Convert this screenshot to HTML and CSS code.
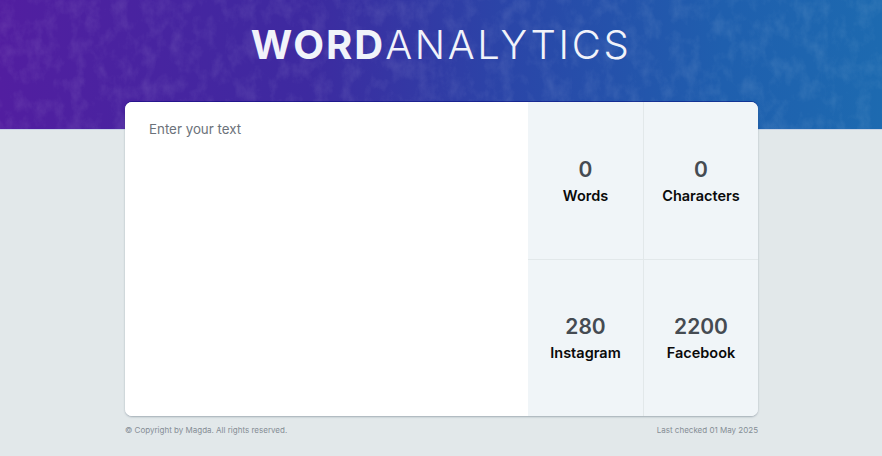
FILE: index.html
```html
<!DOCTYPE html>
<html lang="en">
<head>
    <meta charset="UTF-8">
    <meta name="viewport" content="width=device-width, initial-scale=1.0">
    <title>Word Analytics</title>
    <link rel="stylesheet" href="styles.css">
</head>
<body>
    <header class="banner">
        <svg class="banner-texture" aria-hidden="true">
            <filter id="grain">
                <feTurbulence type="fractalNoise" baseFrequency="0.07 0.05" numOctaves="5" seed="23"/>
                <feColorMatrix values="0 0 0 0 1  0 0 0 0 1  0 0 0 0 1  2 0 0 0 -0.85"/>
            </filter>
            <rect width="100%" height="100%" filter="url(#grain)"/>
        </svg>
        <h1 class="logo"><b>WORD</b>ANALYTICS</h1>
    </header>

    <main class="container">
        <section class="card">
            <textarea class="text-input" placeholder="Enter your text"></textarea>
            <div class="stats">
                <div class="stat">
                    <span class="stat-number">0</span>
                    <span class="stat-label">Words</span>
                </div>
                <div class="stat">
                    <span class="stat-number">0</span>
                    <span class="stat-label">Characters</span>
                </div>
                <div class="stat">
                    <span class="stat-number">280</span>
                    <span class="stat-label">Instagram</span>
                </div>
                <div class="stat">
                    <span class="stat-number">2200</span>
                    <span class="stat-label">Facebook</span>
                </div>
            </div>
        </section>
        <footer class="footer">
            <span>&copy; Copyright by Magda. All rights reserved.</span>
            <span>Last checked 01 May 2025</span>
        </footer>
    </main>
</body>
</html>
```

FILE: styles.css
```css
* {
    box-sizing: border-box;
}
body {
    font-family: Inter, "Liberation Sans", sans-serif;
    background-color: #e2e8ea;
    margin: 0;
    padding: 0;
    overflow: hidden;
}
.banner {
    position: relative;
    height: 130px;
    padding-top: 20px;
    background: linear-gradient(90deg, #521ea0 0%, #3d2aa0 35%, #2a46a8 58%, #1f5fae 82%, #1d6ab0 100%);
    border-bottom: 1px solid #c9d4e6;
    overflow: hidden;
}
.banner-texture {
    position: absolute;
    top: 0;
    left: 0;
    width: 100%;
    height: 100%;
    opacity: 0.09;
}
.logo {
    position: relative;
    margin: 0;
    text-align: center;
    color: #f1f3fa;
    font-size: 40px;
    line-height: 50px;
    font-weight: 300;
    letter-spacing: 2.6px;
}
.logo b {
    font-weight: 700;
    letter-spacing: 2px;
}
.container {
    width: 633px;
    margin: -28px 0 0 125px;
    position: relative;
}
.card {
    display: flex;
    height: 314px;
    background: white;
    border-radius: 7px;
    overflow: hidden;
    box-shadow: 0 -1px 0 rgba(0, 0, 120, 0.45), 0 1px 2px rgba(40, 60, 80, 0.35);
}
.text-input {
    flex: 1;
    padding: 17px 24px;
    border: none;
    outline: none;
    resize: none;
    font-family: inherit;
    font-size: 13.33px;
    line-height: 20px;
    color: #333;
}
.text-input::placeholder {
    color: #6c727a;
    opacity: 1;
}
.stats {
    width: 230px;
    display: grid;
    grid-template-columns: 1fr 1fr;
    grid-template-rows: 1fr 1fr;
    background-color: #f0f5f8;
}
.stat {
    display: flex;
    flex-direction: column;
    align-items: center;
    justify-content: center;
    gap: 2px;
    border-color: #e2e8ea;
    border-style: solid;
    border-width: 0;
}
.stat:nth-child(even) {
    border-left-width: 1px;
}
.stat:nth-child(n+3) {
    border-top-width: 1px;
}
.stat-number {
    font-size: 21px;
    line-height: 28px;
    font-weight: 600;
    color: #454b52;
}
.stat-label {
    font-size: 14.5px;
    line-height: 20px;
    font-weight: 600;
    color: #0a0a0a;
}
.footer {
    display: flex;
    justify-content: space-between;
    margin-top: 9px;
    font-size: 8px;
    line-height: 11px;
    color: #858d95;
}
```
